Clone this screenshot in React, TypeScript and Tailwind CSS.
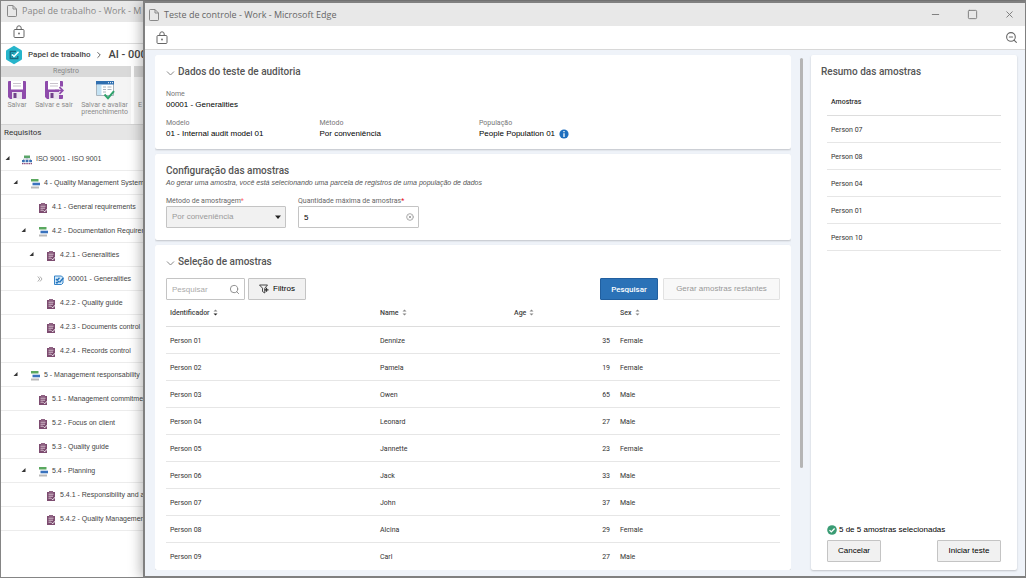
import React from 'react';
import { ZoomOut, Search, Minus, Square, X, ChevronRight, CircleX } from 'lucide-react';

type NodeIcon = 'root' | 'group' | 'item' | 'test';

interface TreeNode {
    level: number;
    icon: NodeIcon;
    label: string;
    state?: 'open' | 'closed';
}

interface Person {
    id: string;
    name: string;
    age: number;
    sex: string;
}

const TREE: TreeNode[] = [
    { level: 0, icon: 'root', label: 'ISO 9001 - ISO 9001', state: 'open' },
    { level: 1, icon: 'group', label: '4 - Quality Management System', state: 'open' },
    { level: 2, icon: 'item', label: '4.1 - General requirements' },
    { level: 2, icon: 'group', label: '4.2 - Documentation Requirements', state: 'open' },
    { level: 3, icon: 'item', label: '4.2.1 - Generalities', state: 'open' },
    { level: 4, icon: 'test', label: '00001 - Generalities', state: 'closed' },
    { level: 3, icon: 'item', label: '4.2.2 - Quality guide' },
    { level: 3, icon: 'item', label: '4.2.3 - Documents control' },
    { level: 3, icon: 'item', label: '4.2.4 - Records control' },
    { level: 1, icon: 'group', label: '5 - Management responsability', state: 'open' },
    { level: 2, icon: 'item', label: '5.1 - Management commitment' },
    { level: 2, icon: 'item', label: '5.2 - Focus on client' },
    { level: 2, icon: 'item', label: '5.3 - Quality guide' },
    { level: 2, icon: 'group', label: '5.4 - Planning', state: 'open' },
    { level: 3, icon: 'item', label: '5.4.1 - Responsibility and authority' },
    { level: 3, icon: 'item', label: '5.4.2 - Quality Management' },
];

const INDENT = ['pl-1', 'pl-3', 'pl-5', 'pl-7', 'pl-9'];

const PEOPLE: Person[] = [
    { id: 'Person 01', name: 'Dennize', age: 35, sex: 'Female' },
    { id: 'Person 02', name: 'Pamela', age: 19, sex: 'Female' },
    { id: 'Person 03', name: 'Owen', age: 65, sex: 'Male' },
    { id: 'Person 04', name: 'Leonard', age: 27, sex: 'Male' },
    { id: 'Person 05', name: 'Jannette', age: 23, sex: 'Female' },
    { id: 'Person 06', name: 'Jack', age: 33, sex: 'Male' },
    { id: 'Person 07', name: 'John', age: 37, sex: 'Male' },
    { id: 'Person 08', name: 'Alcina', age: 29, sex: 'Female' },
    { id: 'Person 09', name: 'Carl', age: 27, sex: 'Male' },
];

const SAMPLES = ['Person 07', 'Person 08', 'Person 04', 'Person 01', 'Person 10'];

const PadlockIcon = () => (
    <svg viewBox="0 0 12 14" className="w-3 h-[14px] shrink-0" fill="none" stroke="#666" strokeWidth="1">
        <rect x="1" y="4.5" width="10" height="8" rx="1" />
        <path d="M3.8 4.5V3a2.2 2.2 0 0 1 4.4 0v1.5" />
        <circle cx="6" cy="8.5" r=".9" fill="#666" stroke="none" />
    </svg>
);

const PageIcon = () => (
    <svg viewBox="0 0 10 12" className="w-[10px] h-3 shrink-0" fill="none" stroke="#888" strokeWidth="1">
        <path d="M.5 1.2c0-.4.3-.7.7-.7H6l3.5 3.5v6.8c0 .4-.3.7-.7.7H1.200c-.4 0-.7-.3-.7-.7zM6 .5V4h3.500" />
    </svg>
);

const LogoIcon = () => (
    <svg viewBox="0 0 18 20" className="w-[18px] h-5 shrink-0">
        <path d="M9 .8 16.200 4.900q.8.500.8 1.300v7.600q0 .8-.8 1.300L9 19.200 1.800 15.100Q1 14.600 1 13.800V6.200q0-.8.800-1.300z" fill="#27b5cb" />
        <path d="M11 6.500H5.200v7h7.600V11" fill="none" stroke="#176a80" strokeWidth="1.300" />
        <path d="m7 9.500 2 2 4.500-4.800" fill="none" stroke="#fff" strokeWidth="1.400" />
        <path d="M6.500 8.500h2M6.500 11.800h1.500" stroke="#176a80" strokeWidth=".8" />
    </svg>
);

const SaveIcon = ({ exit = false }: { exit?: boolean }) => (
    <svg viewBox="0 0 20 20" className="w-5 h-5">
        <path d="M1 2q0-1 1-1h16q1 0 1 1v16q0 1-1 1H3l-2-2z" fill="#8e4bab" />
        <path d="M4 1h12v8.500H4z" fill="#fff" />
        <path d="M6 3.500h8M6 6h8" stroke="#c9c3cc" strokeWidth="1" />
        <path d="M5 12h10v7H5z" fill="#e9e2ee" />
        <path d="M6.500 13h3v5h-3z" fill="#70408a" />
        {exit && (
            <>
                <path d="M15 6.500h5V15h-5z" fill="#f4f4f4" />
                <path d="M11 10.500h7.500M15.500 7.200l3.300 3.300-3.300 3.300" fill="none" stroke="#8e4bab" strokeWidth="1.700" />
            </>
        )}
    </svg>
);

const EvaluateIcon = () => (
    <svg viewBox="0 0 20 20" className="w-5 h-5">
        <path d="M1.500 1.500h17v14h-17z" fill="#fff" stroke="#a9b4bd" />
        <path d="M1 1h18v3.500H1z" fill="#2f6fb0" />
        <path d="M13 2.700h1M15 2.700h1M17 2.700h1" stroke="#fff" strokeWidth="1" />
        <path d="M2 5h4.500v10H2z" fill="#c4e2f3" />
        <path d="M8 7h3M12.500 7h4M8 9.500h3M12.500 9.500h4M8 12h3" stroke="#a9b4bd" strokeWidth="1" />
        <path d="m9.500 14.500 3.500 3.700 6-7" fill="none" stroke="#30a36c" strokeWidth="2" />
    </svg>
);

const TreeIcon = ({ type }: { type: NodeIcon }) => (
    <svg viewBox="0 0 10 10" className="w-[10px] h-[10px] shrink-0">
        {type === 'root' && (
            <>
                <path d="M2 .5h6v2.500H2z" fill="#5aa469" />
                <path d="M1.500 5.500V4h7v1.500M5 3v2" fill="none" stroke="#8fa0b5" strokeWidth=".7" />
                <path d="M0 5h2.800v2.200H0zM3.600 5h2.800v2.200H3.600zM7.200 5H10v2.200H7.200z" fill="#3a72b5" />
                <path d="M0 8.700h1.500M2.100 8.700h1.500M4.300 8.700h1.500M6.500 8.700H8M8.600 8.700H10" stroke="#8c4a78" strokeWidth="1.300" />
            </>
        )}
        {type === 'group' && (
            <>
                <path d="M1 0h7.500v2.500H1z" fill="#5aa85f" />
                <path d="M2.500 3.700H10v2.600H2.500z" fill="#3a72bd" />
                <path d="M1 7.500h8v2H1z" fill="#b9b9b9" />
            </>
        )}
        {type === 'item' && (
            <>
                <path d="M1 1h8v9H1z" fill="#7d4c70" />
                <path d="M3 0h4v2H3z" fill="#8f6283" />
                <path d="M2.500 3.200h5M2.500 5.200H7M2.500 7.200H5" stroke="#e2cfdc" strokeWidth=".9" />
                <path d="m5.500 7.500 1.200 1.300L9.300 6" fill="none" stroke="#fff" strokeWidth=".9" />
            </>
        )}
        {type === 'test' && (
            <>
                <path d="M.500 1h7l1.500 1.500V8L7.500 9.500h-7z" fill="#d4e9f9" stroke="#3684c8" strokeWidth="1" />
                <path d="m2 4 1.200 1.200L5.500 2.800M2 7l1 1 2-2M5.500 7.500 9.300 3" fill="none" stroke="#2475bd" strokeWidth="1.400" />
            </>
        )}
    </svg>
);

const Expander = ({ state }: { state?: 'open' | 'closed' }) => {
    if (!state) return <span className="w-[17px] shrink-0" />;
    return (
        <button aria-label="Expandir" className="w-[17px] shrink-0 flex items-center">
            {state === 'open' ? (
                <svg viewBox="0 0 5 5" className="w-[5px] h-[5px] -translate-y-px">
                    <path d="M4.500 0v4H.500z" fill="#333" />
                </svg>
            ) : (
                <svg viewBox="0 0 6 6" className="w-[6px] h-[6px] -translate-y-px">
                    <path d="m.800.500 2 2.500-2 2.500M3 .5 5 3 3 5.500" fill="none" stroke="#999" strokeWidth=".8" />
                </svg>
            )}
        </button>
    );
};

const SortIcon = ({ active = false }: { active?: boolean }) => (
    <svg viewBox="0 0 5 7" className="w-[5px] h-[7px]">
        <path d="M.500 2.500 2.500.500l2 2z" fill="#888" />
        <path d="m.500 4.500 2 2 2-2z" fill={active ? '#222' : '#888'} />
    </svg>
);

const Field = ({ label, value, info = false }: { label: string; value: string; info?: boolean }) => (
    <div>
        <dt className="text-[7px] leading-[9px] text-[#777]">{label}</dt>
        <dd className="flex items-center gap-1 font-['Liberation_Sans',sans-serif] text-[8px] leading-[11px] text-black">
            {value}
            {info && (
                <svg viewBox="0 0 10 10" className="w-[10px] h-[10px]">
                    <circle cx="5" cy="5" r="4.600" fill="#1f6fbe" />
                    <path d="M5 2v1.300M5 4.300V8" stroke="#fff" strokeWidth="1.300" />
                </svg>
            )}
        </dd>
    </div>
);

const RibbonButton = ({ icon, children }: { icon: React.ReactNode; children: React.ReactNode }) => (
    <button className="flex flex-col items-center gap-[2px] text-[7px] leading-[7px] text-[#8b8b8b]">
        {icon}
        <span className="whitespace-pre-line">{children}</span>
    </button>
);

const WorkPaperWindow = () => (
    <div className="h-full overflow-hidden border border-[#858585] bg-white whitespace-nowrap flex flex-col">
        <div className="h-[21px] shrink-0 bg-[#e8e8e8] flex items-center gap-[5px] px-[6px] pb-[2px] font-['Open_Sans',sans-serif] text-[9px] text-[#888]">
            <PageIcon />
            Papel de trabalho - Work - M
        </div>
        <div className="h-[22px] shrink-0 flex items-center px-3 pb-[2px] border-b border-[#ddd]">
            <PadlockIcon />
        </div>
        <div className="h-[22px] shrink-0 flex items-center px-1 text-[#444]">
            <LogoIcon />
            <a href="#" className="ml-[5px] text-[8px] font-medium">Papel de trabalho</a>
            <ChevronRight className="w-[10px] h-[10px] mx-1" />
            <span className="text-[11px] font-medium">AI - 000</span>
        </div>
        <div className="h-[58px] shrink-0 flex gap-[3px] bg-white">
            <div className="w-[130px] bg-[#f4f4f4]">
                <div className="h-[11px] bg-[#d9d9d9] text-center text-[7px] leading-[11px] text-[#888]">Registro</div>
                <div className="flex justify-between pt-[3px] pl-[6px] pr-[3px]">
                    <RibbonButton icon={<SaveIcon />}>Salvar</RibbonButton>
                    <RibbonButton icon={<SaveIcon exit />}>Salvar e sair</RibbonButton>
                    <RibbonButton icon={<EvaluateIcon />}>{'Salvar e avaliar\npreenchimento'}</RibbonButton>
                </div>
            </div>
            <div className="flex-1 bg-[#f4f4f4]">
                <div className="h-[11px] bg-[#d9d9d9]" />
                <p className="pt-[25px] pl-1 text-[7px] leading-[7px] text-[#8b8b8b]">E</p>
            </div>
        </div>
        <h2 className="h-4 shrink-0 px-[3px] bg-[#e6e6e6] border-t border-[#d4d4d4] text-[8px] leading-4 text-[#333]">Requisitos</h2>
        <ul className="pt-[7px] font-['Liberation_Sans',sans-serif] text-[7px] text-[#444]">
            {TREE.map((node) => (
                <li key={node.label} className={`h-6 flex items-center pt-[2px] border-b border-[#ececec] ${INDENT[node.level]}`}>
                    <Expander state={node.state} />
                    <TreeIcon type={node.icon} />
                    <span className="ml-1">{node.label}</span>
                </li>
            ))}
        </ul>
    </div>
);

const Card = ({ className = '', children }: { className?: string; children: React.ReactNode }) => (
    <section className={`bg-white rounded-xs shadow-[0_1px_2px_rgba(0,0,0,0.2)] ${className}`}>{children}</section>
);

const CardTitle = ({ collapsible = false, children }: { collapsible?: boolean; children: React.ReactNode }) => (
    <h2 className="flex items-center gap-[3px] text-[10px] leading-3 font-medium text-[#555]">
        {collapsible && (
            <svg viewBox="0 0 9 9" className="w-[9px] h-[9px]" fill="none" stroke="#888" strokeWidth="1">
                <path d="m1 3.500 3.500 3.500L8 3.500" />
            </svg>
        )}
        {children}
    </h2>
);

const buttonBase = "h-[22px] rounded-[1px] border font-['Liberation_Sans',sans-serif] text-[8px]";
const inputBase = "block w-full h-[22px] rounded-[1px] border border-[#c4c4c4] pl-[5px] font-['Liberation_Sans',sans-serif] text-[8px]";

const TestWindow = () => (
    <div className="absolute left-[143px] top-px right-0 bottom-0 border-2 border-r border-[#808080] bg-white shadow-[-2px_0_12px_rgba(0,0,0,0.3)] flex flex-col">
        <header className="h-[23px] shrink-0 bg-[#e8e8e8] flex items-center gap-[5px] pl-1 pr-[10px] font-['Open_Sans',sans-serif] text-[9px] text-[#666]">
            <PageIcon />
            <h1 className="flex-1">Teste de controle - Work - Microsoft Edge</h1>
            <div className="flex gap-[26px] text-[#777]">
                <button aria-label="Minimizar"><Minus className="w-[11px] h-[11px]" strokeWidth={2} /></button>
                <button aria-label="Maximizar"><Square className="w-[11px] h-[11px]" strokeWidth={2} /></button>
                <button aria-label="Fechar"><X className="w-[11px] h-[11px]" strokeWidth={2} /></button>
            </div>
        </header>
        <div className="h-6 shrink-0 flex items-center justify-between pl-[11px] pr-[7px] border-b border-[#d8d8d8]">
            <PadlockIcon />
            <button aria-label="Reduzir zoom" className="text-[#666]"><ZoomOut className="w-[13px] h-[13px]" /></button>
        </div>

        <div className="flex-1 min-h-0 flex bg-[#eff3f9] pt-[5px] pl-[10px] pr-2 pb-[6px]">
            <main className="flex-1 min-w-0 flex flex-col gap-[5px] overflow-hidden">
                <Card className="h-[94px] shrink-0 px-[11px] pt-[11px]">
                    <CardTitle collapsible>Dados do teste de auditoria</CardTitle>
                    <dl className="pt-3">
                        <Field label="Nome" value="00001 - Generalities" />
                        <div className="grid grid-cols-4 pt-[9px]">
                            <Field label="Modelo" value="01 - Internal audit model 01" />
                            <Field label="Método" value="Por conveniência" />
                            <div className="pl-[6px]">
                                <Field label="População" value="People Population 01" info />
                            </div>
                        </div>
                    </dl>
                </Card>

                <Card className="h-[86px] shrink-0 px-[11px] pt-[11px]">
                    <CardTitle>Configuração das amostras</CardTitle>
                    <p className="font-['Liberation_Sans',sans-serif] text-[7px] leading-3 italic text-[#555]">
                        Ao gerar uma amostra, você está selecionando uma parcela de registros de uma população de dados
                    </p>
                    <div className="flex gap-3 pt-2">
                        <div className="w-[120px]">
                            <label htmlFor="method" className="block text-[7px] leading-[9px] text-[#666]">
                                Método de amostragem<span className="text-red-400">*</span>
                            </label>
                            <div className="relative">
                                <select
                                    id="method"
                                    disabled
                                    className={`${inputBase} appearance-none bg-[#f1f1f1] text-[#999] opacity-100`}
                                >
                                    <option>Por conveniência</option>
                                </select>
                                <svg viewBox="0 0 6 4" className="absolute right-[5px] top-[9px] w-[6px] h-1">
                                    <path d="M0 .500h6L3 4z" fill="#222" />
                                </svg>
                            </div>
                        </div>
                        <div className="w-[121px]">
                            <label htmlFor="amount" className="block text-[7px] leading-[9px] text-[#666]">
                                Quantidade máxima de amostras<span className="text-red-600">*</span>
                            </label>
                            <div className="relative">
                                <input id="amount" defaultValue="5" className={`${inputBase} text-black`} />
                                <CircleX className="absolute right-[5px] top-[7px] w-2 h-2 text-[#aaa]" strokeWidth={3} />
                            </div>
                        </div>
                    </div>
                </Card>

                <Card className="flex-1 min-h-0 overflow-hidden px-[11px] pt-[11px]">
                    <CardTitle collapsible>Seleção de amostras</CardTitle>
                    <div className="flex items-center gap-[3px] pt-[10px]">
                        <div className="relative w-[79px]">
                            <input
                                aria-label="Pesquisar"
                                placeholder="Pesquisar"
                                className={`${inputBase} pr-5 placeholder:text-[#aaa]`}
                            />
                            <Search className="absolute right-[5px] top-[6px] w-[11px] h-[11px] text-[#888]" strokeWidth={2} />
                        </div>
                        <button className={`${buttonBase} w-[58px] flex items-center justify-center gap-1 border-[#c4c4c4] bg-[#f1f1f1] text-black`}>
                            <svg viewBox="0 0 10 10" className="w-[10px] h-[10px]" fill="none" stroke="#333" strokeWidth=".9">
                                <path d="M.500 1h8L5.800 4.200V9L3.500 7.500V4.200z" />
                                <path d="M5.500 5.800h4M7.500 3.800v4" strokeWidth="1.200" />
                            </svg>
                            Filtros
                        </button>
                        <button className="ml-auto w-[58px] h-[22px] rounded-[1px] border border-[#215f9f] bg-[#2b72b7] pt-px text-[8px] font-medium text-white">
                            Pesquisar
                        </button>
                        <button disabled className={`${buttonBase} ml-[2px] w-[117px] border-[#e2e2e2] bg-[#f8f8f8] text-[#999]`}>
                            Gerar amostras restantes
                        </button>
                    </div>
                    <table className="w-full table-fixed text-left text-[7px] text-[#333]">
                        <colgroup>
                            <col className="w-[210px]" />
                            <col className="w-[134px]" />
                            <col className="w-[106px]" />
                            <col />
                        </colgroup>
                        <thead>
                            <tr className="h-[26px] border-b border-[#ddd]">
                                {['Identificador', 'Name', 'Age', 'Sex'].map((title, i) => (
                                    <th key={title} className="px-1 font-medium text-[#444]">
                                        <button className="flex items-center gap-[3px]">
                                            {title}
                                            <SortIcon active={i === 0} />
                                        </button>
                                    </th>
                                ))}
                            </tr>
                        </thead>
                        <tbody>
                            {PEOPLE.map((person) => (
                                <tr key={person.id} className="h-[27px] border-b border-[#e6e6e6] last:border-b-0">
                                    <td className="px-1 pt-[3px]">{person.id}</td>
                                    <td className="px-1 pt-[3px]">{person.name}</td>
                                    <td className="px-[6px] pt-[3px] text-right">{person.age}</td>
                                    <td className="px-1 pt-[3px]">{person.sex}</td>
                                </tr>
                            ))}
                        </tbody>
                    </table>
                </Card>
            </main>

            <div className="w-5 shrink-0 flex justify-center pt-[3px]">
                <div className="w-[3px] h-4/5 rounded-full bg-[#b5b5b5]" />
            </div>

            <aside className="w-[206px] shrink-0">
                <Card className="h-full flex flex-col px-[10px] pt-[11px] pb-2">
                    <CardTitle>Resumo das amostras</CardTitle>
                    <table className="mt-[10px] mx-[6px] text-left text-[7px] text-[#333]">
                        <thead>
                            <tr className="h-[27px] border-b border-[#ddd]">
                                <th className="px-1 pt-[2px] font-medium">Amostras</th>
                            </tr>
                        </thead>
                        <tbody>
                            {SAMPLES.map((sample) => (
                                <tr key={sample} className="h-[27px] border-b border-[#e6e6e6]">
                                    <td className="px-1 pt-[3px]">{sample}</td>
                                </tr>
                            ))}
                        </tbody>
                    </table>
                    <footer className="mt-auto px-[6px]">
                        <p className="flex items-center gap-[2px] font-['Liberation_Sans',sans-serif] text-[8px] leading-3 text-black">
                            <svg viewBox="0 0 10 10" className="w-[10px] h-[10px]">
                                <circle cx="5" cy="5" r="4.800" fill="#3a9c74" />
                                <path d="m2.500 5.100 1.800 1.800 3.300-3.400" fill="none" stroke="#fff" strokeWidth="1.300" />
                            </svg>
                            5 de 5 amostras selecionadas
                        </p>
                        <div className="flex justify-between pt-1">
                            <button className={`${buttonBase} w-[54px] border-[#c4c4c4] bg-[#f1f1f1] text-black`}>Cancelar</button>
                            <button className={`${buttonBase} w-16 border-[#c4c4c4] bg-[#f1f1f1] text-black`}>Iniciar teste</button>
                        </div>
                    </footer>
                </Card>
            </aside>
        </div>
    </div>
);

const App: React.FC = () => {
    return (
        <div className="relative h-screen overflow-hidden font-[Roboto,sans-serif]">
            <WorkPaperWindow />
            <TestWindow />
        </div>
    );
};

export default App;
